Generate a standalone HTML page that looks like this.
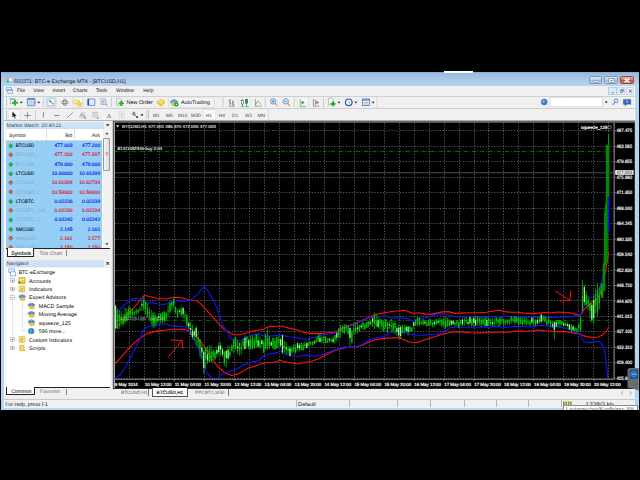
<!DOCTYPE html>
<html><head><meta charset="utf-8"><title>603371: BTC-e Exchange MT4 - [BTCUSD,H1]</title>
<style>
html,body{margin:0;padding:0;background:#000;}
body{width:640px;height:480px;overflow:hidden;position:relative;font-family:"Liberation Sans",sans-serif;font-size:5.1px;color:#000;line-height:1;text-rendering:geometricPrecision;}
div,span{position:absolute;white-space:nowrap;}
#win{left:1.4px;top:71.8px;width:637.2px;height:338px;background:linear-gradient(#7e98b8 0,#97badf 0.8px,#a3c3e4 5px,#b0cdea 10px,#b7d4ee 13.8px,#b2d5f3 20px,#b2d5f3 100%);}
#client{left:3.5px;top:85.8px;width:631.5px;height:322.4px;background:#f0f0f0;border-left:0.5px solid #fff;border-right:0.6px solid #fff;box-sizing:border-box}
.t{color:#1a1a1a;}
#title{left:14px;top:78.1px;font-size:5.35px;color:#000;letter-spacing:-0.05px;}
.menu{top:88.2px;font-size:5.1px;}
.sep{width:0.5px;background:#a8a8a8;}
.tbline{left:4.4px;width:630.2px;height:0.5px;background:#d0d0d0;}
.mwr{left:5.8px;width:96.2px;height:9.27px;background:#9fd2fa;border-top:0.5px solid #b8dffc;box-sizing:border-box;}
.mwr .ar{position:absolute;left:2.4px;top:2.2px;width:4.6px;height:4.6px;}
.mwr span{top:2.3px;font-size:5.1px;}
.mwr .sym{left:9.8px;}
.mwr .bid{right:29.6px;}
.mwr .ask{right:2px;}
.ptitle{left:5.6px;width:98.4px;height:7px;background:linear-gradient(#d6e5f7,#c9def4);font-size:5.3px;color:#3a4a60;}
.ptitle span{left:1px;top:1.1px;}
.tree{font-size:5.1px;color:#000;}
.ic{width:6.4px;height:6px;}
.per{top:112.6px;font-size:4.6px;color:#333;}
</style></head><body>
<div id="win"></div>
<div id="client"></div>
<!-- title -->
<div style="left:444px;top:70.9px;width:28.6px;height:1.8px;background:#fff;border-radius:0 0 1px 1px"></div>
<svg style="position:absolute;left:5.6px;top:77.4px" width="6.4" height="6" viewBox="0 0 6.4 6"><rect x="2.6" y="0.9" width="3.4" height="3.6" fill="#dcecfb" stroke="#8ab4e6" stroke-width="0.45"/><rect x="3.3" y="1.9" width="1.9" height="1.6" fill="#fff"/><circle cx="1.7" cy="2.1" r="1.15" fill="#f0923a"/><path d="M0.3 5.6q0-2.4 1.5-2.4t1.5 2.4z" fill="#4cb84c"/></svg>
<!-- window buttons -->
<div style="left:588.7px;top:76.4px;width:13.8px;height:7.6px;border-radius:1.6px;background:linear-gradient(#dbe7f5,#b4cbe6 50%,#9dbbdd 51%,#bdd3ec);border:0.5px solid #7b97ba;box-sizing:border-box"></div>
<div style="left:604.3px;top:76.4px;width:13.8px;height:7.6px;border-radius:1.6px;background:linear-gradient(#dbe7f5,#b4cbe6 50%,#9dbbdd 51%,#bdd3ec);border:0.5px solid #7b97ba;box-sizing:border-box"></div>
<div style="left:619.8px;top:76.4px;width:14.2px;height:7.6px;border-radius:1.6px;background:linear-gradient(#e6b0a2,#d67a66 50%,#c8452e 51%,#d8755c);border:0.5px solid #8a4a3c;box-sizing:border-box"></div>
<svg style="position:absolute;left:588px;top:76px" width="48" height="9" viewBox="0 0 48 9"><rect x="5.2" y="4.6" width="5" height="1.7" rx="0.5" fill="#fff" stroke="#445" stroke-width="0.4"/><rect x="20.8" y="2.6" width="5.2" height="3.8" fill="#fff" stroke="#445" stroke-width="0.4"/><rect x="22.4" y="3.9" width="2" height="1.3" fill="#5a78a0"/><path d="M36.7 2.6l4.6 3.8M41.3 2.6l-4.6 3.8" stroke="#fff" stroke-width="1.5"/></svg>
<!-- menu bar -->
<svg style="position:absolute;left:6.2px;top:87.1px" width="7" height="7" viewBox="0 0 14 14"><rect x="0.8" y="0.8" width="9.6" height="6.6" fill="#e6f0fc" stroke="#6a9ce0" stroke-width="1.2"/><rect x="3.6" y="4.6" width="9.6" height="8.4" fill="#f4f9ff" stroke="#5a90d8" stroke-width="1.2"/><path d="M3.6 6.6h9.6" stroke="#5a90d8" stroke-width="1.6"/><path d="M5.4 9.6h6" stroke="#a8c6ee" stroke-width="1"/></svg>
<!-- mdi buttons -->
<div style="left:608.4px;top:87px;width:8.4px;height:7.6px;background:#dcebfb;border:0.4px solid #b8cde6;box-sizing:border-box"></div>
<div style="left:617.4px;top:87px;width:8px;height:7.6px;background:#e9f1fb;border:0.4px solid #c8d8ec;box-sizing:border-box"></div>
<div style="left:626px;top:87px;width:8.2px;height:7.6px;background:#e9f1fb;border:0.4px solid #c8d8ec;box-sizing:border-box"></div>
<svg style="position:absolute;left:608px;top:87px" width="27" height="8" viewBox="0 0 27 8"><path d="M3.6 5.8h2.2" stroke="#556" stroke-width="0.7"/><rect x="12.2" y="3.2" width="2.4" height="2.2" fill="none" stroke="#556" stroke-width="0.6"/><path d="M13.2 3.2V2.2h2.4v2.2h-1" fill="none" stroke="#556" stroke-width="0.6"/><path d="M21.2 2.6l2.4 3M23.6 2.6l-2.4 3" stroke="#445" stroke-width="0.8"/></svg>
<div class="tbline" style="top:95.8px"></div>
<div class="tbline" style="top:108.4px"></div>
<div class="tbline" style="top:120.4px;background:#b8b8b8"></div>
<svg style="position:absolute;left:0;top:0" width="640" height="122" viewBox="0 0 640 122">
<path d="M6.5 97.4v9.2" stroke="#c2c2c2" stroke-width="0.9"/>
<path d="M6.5 110.2v9.2" stroke="#c2c2c2" stroke-width="0.9"/>
<path d="M148.6 110.2v9.2" stroke="#c2c2c2" stroke-width="0.9"/>
<path d="M43.60 97.6v9.4" stroke="#b0b0b0" stroke-width="0.6"/>
<path d="M111.40 97.6v9.4" stroke="#b0b0b0" stroke-width="0.6"/>
<path d="M223.00 97.6v9.4" stroke="#b0b0b0" stroke-width="0.6"/>
<path d="M265.30 97.6v9.4" stroke="#b0b0b0" stroke-width="0.6"/>
<path d="M294.40 97.6v9.4" stroke="#b0b0b0" stroke-width="0.6"/>
<path d="M323.60 97.6v9.4" stroke="#b0b0b0" stroke-width="0.6"/>
<path d="M35.50 110.2v9" stroke="#b0b0b0" stroke-width="0.6"/>
<path d="M146.80 110.2v9" stroke="#b0b0b0" stroke-width="0.6"/>
<path d="M377 96.6v11.4M268.4 109v11" stroke="#c8c8c8" stroke-width="0.6"/>
<rect x="46.2" y="97.2" width="10" height="10" rx="0.8" fill="#d6e8fa" stroke="#a8c8ea" stroke-width="0.5"/>
<rect x="72.4" y="97.2" width="10.6" height="10" rx="0.8" fill="#f8f8f8" stroke="#cfcfcf" stroke-width="0.5"/>
<rect x="239" y="97.2" width="11.2" height="10" rx="0.8" fill="#f4f7fb" stroke="#cdd6e0" stroke-width="0.5"/>
<rect x="297.6" y="97.2" width="10.4" height="10" rx="0.8" fill="#f8f8f8" stroke="#cfcfcf" stroke-width="0.5"/>
<rect x="8.2" y="109.6" width="11.6" height="10.2" rx="0.8" fill="#f9f9f9" stroke="#d0d0d0" stroke-width="0.5"/>
<rect x="203.2" y="109.6" width="12.6" height="10.2" rx="0.8" fill="#f9f9f9" stroke="#d0d0d0" stroke-width="0.5"/>
<rect x="168.6" y="97.2" width="45.6" height="10" rx="0.8" fill="#f5f5f5" stroke="#cdcdcd" stroke-width="0.5"/>
<rect x="10.2" y="98.8" width="4.8" height="4.6" fill="#f2f6fc" stroke="#7a9cd0" stroke-width="0.6"/><path d="M10.2 99.2h4.8" stroke="#5a86c8" stroke-width="0.8"/><path d="M12.2 102.7h5.6M15 99.9v5.6" stroke="#1cb81c" stroke-width="1.9"/>
<path d="M19.80 101.7h3l-1.5 1.9z" fill="#222"/>
<path d="M37.30 101.7h3l-1.5 1.9z" fill="#222"/>
<path d="M337.40 101.7h3l-1.5 1.9z" fill="#222"/>
<path d="M354.40 101.7h3l-1.5 1.9z" fill="#222"/>
<path d="M371.60 101.7h3l-1.5 1.9z" fill="#222"/>
<rect x="27.4" y="98.4" width="7.6" height="7.4" rx="0.5" fill="#dce8f8" stroke="#4a7ac8" stroke-width="0.8"/><path d="M27.4 99.2h7.6" stroke="#3a68b8" stroke-width="1"/><path d="M29 101.4h4.4v3h-4.4zM31.2 101.4v3M29 102.9h4.4" stroke="#6a90cc" stroke-width="0.4" fill="#fff"/><path d="M34.6 101.6l1 .8-1 .8z" fill="#2a58a8"/>
<rect x="47.9" y="98.8" width="6.8" height="6.8" rx="0.6" fill="#fbfdff" stroke="#8ab4e4" stroke-width="0.6"/><path d="M49.2 100.2l2 2" stroke="#18a818" stroke-width="1.3"/><path d="M51.4 102.4l2 2" stroke="#f06020" stroke-width="1.3"/>
<path d="M64.8 98.8l1.5 1.7h-.9v1.3h1.3v-.9l1.7 1.5-1.7 1.5v-.9h-1.3v1.3h.9l-1.5 1.7-1.5-1.7h.9v-1.3h-1.3v.9l-1.7-1.5 1.7-1.5v.9h1.3v-1.3h-.9z" fill="#f4f4f4" stroke="#444" stroke-width="0.55"/>
<path d="M73.6 99.4h2.6l.7.9h2.6v3.6h-5.9z" fill="#ffe98a" stroke="#d8b448" stroke-width="0.4"/><path d="M79.6 101.2l.95 1.75 1.95.3-1.4 1.4.3 1.95-1.8-.9-1.8.9.3-1.95-1.4-1.4 1.95-.3z" fill="#ffd83a" stroke="#c89a18" stroke-width="0.35"/><path d="M75.2 104v1.8" stroke="#999" stroke-width="0.4"/>
<rect x="87.4" y="99" width="7.4" height="6.4" rx="0.5" fill="#f4f8ff" stroke="#2a66cc" stroke-width="0.7"/><path d="M88.5 99.3v5.8" stroke="#1a4aa8" stroke-width="1.2"/><path d="M88 99.5h1.4" stroke="#d03020" stroke-width="0.7"/><path d="M90 100.8h3.8M90 102.2h3.8M90 103.6h3.8" stroke="#b8cdee" stroke-width="0.4"/>
<rect x="100.6" y="98.4" width="5" height="6" fill="#eee" stroke="#a0a0a0" stroke-width="0.4"/><circle cx="104" cy="102.2" r="2.3" fill="#d4e8fa" stroke="#5a90c8" stroke-width="0.6"/><path d="M103.4 101v1.4h1" stroke="#5a80b0" stroke-width="0.4" fill="none"/><path d="M105.7 104l2 2.2" stroke="#c8982a" stroke-width="1"/>
<path d="M116.6 98.2h3.4l1.6 1.6v5.4h-5z" fill="#f6f6f6" stroke="#909090" stroke-width="0.5"/><path d="M117.6 100.4h2M117.6 101.8h3" stroke="#bbb" stroke-width="0.4"/><path d="M118.6 103.4h5.4M121.3 100.7v5.4" stroke="#1cb81c" stroke-width="1.9"/>
<path d="M157 102l4-2.9 3.9 2.6-3.9 3.9z" fill="#ffd84a" stroke="#c89818" stroke-width="0.4"/><path d="M157 102l4 3.6 3.9-3.9v1l-3.9 3.9-4-3.6z" fill="#e0a820"/><path d="M159 101.6l2-1.4 1.9 1.2" stroke="#fff4b0" stroke-width="0.5" fill="none"/>
<path d="M170.4 101.8q3.6-4.6 7.2 0z" fill="#5a9ce0" stroke="#2a68b8" stroke-width="0.4"/><ellipse cx="174" cy="101.9" rx="3.9" ry="1.1" fill="#7ab8f0" stroke="#2a68b8" stroke-width="0.35"/><path d="M171 102.8h6q.4 2.6-3 3.2-3.4-.6-3-3.2z" fill="#f4d048" stroke="#b08c18" stroke-width="0.4"/><circle cx="176.4" cy="104.4" r="1.9" fill="#20b820" stroke="#0a780a" stroke-width="0.4"/><path d="M175.9 103.5l1.4.9-1.4.9z" fill="#fff"/>
<path d="M230 99v6.6M229 101.2h1M230 103.4h1M233 100.2v6M232 102.6h1M233 104.6h1" stroke="#333" stroke-width="0.6"/><path d="M228.6 106.4h6.6" stroke="#10a010" stroke-width="0.5"/>
<path d="M242.4 98.6v7.8M246.6 98.6v7.8" stroke="#222" stroke-width="0.5"/><rect x="241.5" y="100.4" width="1.8" height="3.6" fill="#fff" stroke="#222" stroke-width="0.45"/><rect x="245.5" y="99.4" width="2.2" height="3.8" fill="#18a818" stroke="#0a600a" stroke-width="0.45"/><path d="M240.6 106.4h8.4" stroke="#10a010" stroke-width="0.5"/>
<path d="M255.4 99.2v7h6" stroke="#555" stroke-width="0.5" fill="none"/><path d="M255.8 104.6q1.6-4.6 3-2.6t2.4 2.6" stroke="#18a018" stroke-width="0.6" fill="none"/>
<circle cx="273.2" cy="101.4" r="2.7" fill="#d6ebfb" stroke="#3a78c8" stroke-width="0.7"/>
<path d="M275.1 103.4l2.4 2.6" stroke="#c8962a" stroke-width="1.1"/>
<path d="M271.8 101.4h2.8" stroke="#2a5aa8" stroke-width="0.6"/>
<path d="M273.2 100v2.8" stroke="#2a5aa8" stroke-width="0.6"/>
<circle cx="285.8" cy="101.4" r="2.7" fill="#d6ebfb" stroke="#3a78c8" stroke-width="0.7"/>
<path d="M287.7 103.4l2.4 2.6" stroke="#c8962a" stroke-width="1.1"/>
<path d="M284.4 101.4h2.8" stroke="#2a5aa8" stroke-width="0.6"/>
<path d="M300.2 99v7.2h5.6" stroke="#444" stroke-width="0.5" fill="none"/><path d="M301.6 100.6l3 1.9-3 1.9z" fill="#18a818"/>
<path d="M313.4 99v7.2h6" stroke="#444" stroke-width="0.5" fill="none"/><path d="M315.4 99.6v5.4" stroke="#2a62c8" stroke-width="0.6"/><path d="M316.4 100.8l2.6 1.7-2.6 1.7z" fill="#e04818"/>
<path d="M328.4 98.2h3.6l1.4 1.4v5.2h-5z" fill="#f4f4f4" stroke="#8a8a8a" stroke-width="0.5"/><path d="M330.6 103.8h5M333.1 101.3v5" stroke="#18b018" stroke-width="1.8"/>
<circle cx="348.8" cy="102.3" r="3.3" fill="#fff" stroke="#1a58b8" stroke-width="1.2"/><path d="M348.8 100.6v1.8l1.2.8" stroke="#333" stroke-width="0.5" fill="none"/>
<rect x="362.4" y="99" width="7.2" height="6.4" fill="#f4f8ff" stroke="#2a62c8" stroke-width="0.7"/><path d="M362.4 100h7.2" stroke="#2a62c8" stroke-width="1"/><path d="M363.6 102.4h4.8" stroke="#d04010" stroke-width="0.5" fill="none"/><path d="M363.6 104h4.8" stroke="#20a020" stroke-width="0.5"/>
<circle cx="544.2" cy="102" r="3" fill="#3a78d8" stroke="#2a58a8" stroke-width="0.4"/><circle cx="543.6" cy="101.2" r="1.2" fill="#8ab8f0"/>
<rect x="550" y="97.2" width="52.6" height="9.6" fill="#fff" stroke="#b8c4d0" stroke-width="0.5"/>
<path d="M604.7 101.4h3l-1.5 1.8z" fill="#222"/>
<circle cx="616.2" cy="100.8" r="1.9" fill="#e8f2ff" stroke="#2a68d0" stroke-width="0.8"/><path d="M614.8 102.4l-2.2 2.6" stroke="#2a68d0" stroke-width="1"/>
<path d="M623.4 99.4h7.4v4.8h-4.2l-1.6 1.8v-1.8h-1.6z" fill="#3a68b8" stroke="#2a4a88" stroke-width="0.4"/><path d="M627.1 100.4v2.6" stroke="#e8f0ff" stroke-width="0.8"/>
<path d="M12.4 111.6v6l1.5-1.3 1 2.2.9-.4-1-2.2h1.9z" fill="#222"/>
<path d="M27.5 111.8v6.8M24 115.5h7" stroke="#555" stroke-width="0.55"/>
<path d="M43.4 112.2v5.4" stroke="#444" stroke-width="0.6"/><path d="M54 115.5h5.4" stroke="#444" stroke-width="0.6"/><path d="M67.2 117.9l5.6-5.6" stroke="#444" stroke-width="0.55"/>
<path d="M79.6 118l5.6-5.6M80.6 114.6l4.8 2M79.4 116.4l3.4-4.6M82 118.2l3.6-3" stroke="#555" stroke-width="0.45"/><text x="84.2" y="119.2" font-size="2.6" font-family="Liberation Sans, sans-serif" fill="#222">E</text>
<path d="M92 112.4h6.4M92 114h6.4M92 115.6h6.4M92 117.2h6.4" stroke="#888" stroke-width="0.4"/><text x="97" y="119.4" font-size="2.6" font-family="Liberation Sans, sans-serif" fill="#222">F</text>
<text x="106.8" y="117.6" font-size="6" font-family="Liberation Serif, serif" fill="#555">A</text>
<rect x="119.4" y="111.8" width="5" height="6.2" fill="#f6f6f6" stroke="#999" stroke-width="0.4" stroke-dasharray="0.6 0.4"/><text x="120.3" y="117" font-size="5" font-family="Liberation Serif, serif" fill="#777">T</text>
<path d="M132.4 113.2l1.4-1.4 1.4 1.4M133.8 112v4M131.8 114h4" stroke="#333" stroke-width="0.55" fill="none"/><path d="M134.4 114.6l3 2.4" stroke="#333" stroke-width="0.6"/><path d="M135.8 117.8l2.4.2-.6-2.2z" fill="#333"/>
<path d="M140.5 114.3h3l-1.5 1.9z" fill="#222"/>
</svg>
<!-- market watch -->
<div style="left:5.2px;top:121.2px;width:105.2px;height:137px;background:#f0f0f0"></div>
<div class="ptitle" style="top:121.6px"></div>
<svg style="position:absolute;left:106.3px;top:123.6px" width="3.4" height="2.9" viewBox="0 0 6 6" preserveAspectRatio="none"><path d="M0.8 0.8l4.4 4.4M5.2 0.8l-4.4 4.4" stroke="#111" stroke-width="1.9"/></svg>
<div style="left:5.8px;top:129.1px;width:104.4px;height:119.2px;background:#fff"></div>
<div style="left:5.8px;top:140.2px;width:96.2px;height:0.5px;background:#d8d8d8"></div>
<svg style="position:absolute;left:5.8px;top:140.6px" width="96.2" height="107.5" viewBox="5.8 140.6 96.2 107.5" font-family="Liberation Sans, sans-serif" font-size="5" text-rendering="geometricPrecision">
<rect x="5.8" y="140.6" width="96.2" height="108" fill="#92cff9"/>
<path d="M5.8 140.60H102" stroke="#b2c6d6" stroke-width="0.45"/>
<path d="M10.60 143.30l2.1 2.2h-1.1v1.7h-2v-1.7h-1.1z" fill="#34c834" stroke="#0b5c0b" stroke-width="0.45"/>
<text x="15.6" y="147" fill="#000" stroke="#000" stroke-width="0.07" textLength="18.3" lengthAdjust="spacingAndGlyphs">BTCUSD</text>
<text x="72.4" y="147" fill="#1414f4" stroke="#1414f4" stroke-width="0.14" text-anchor="end">477.003</text>
<text x="100" y="147" fill="#1414f4" stroke="#1414f4" stroke-width="0.14" text-anchor="end">477.200</text>
<path d="M5.8 149.87H102" stroke="#b2c6d6" stroke-width="0.45"/>
<path d="M10.60 156.57l2.1 -2.2h-1.1v-1.7h-2v1.7h-1.1z" fill="#ff6a28" stroke="#8a2400" stroke-width="0.45"/>
<text x="15.6" y="156" fill="#8fa6ba" textLength="26.0" lengthAdjust="spacingAndGlyphs">BTCUSD_...</text>
<text x="72.4" y="156" fill="#e01030" stroke="#e01030" stroke-width="0.14" text-anchor="end">477.200</text>
<text x="100" y="156" fill="#e01030" stroke="#e01030" stroke-width="0.14" text-anchor="end">477.397</text>
<path d="M5.8 159.14H102" stroke="#b2c6d6" stroke-width="0.45"/>
<path d="M10.60 161.84l2.1 2.2h-1.1v1.7h-2v-1.7h-1.1z" fill="#34c834" stroke="#0b5c0b" stroke-width="0.45"/>
<text x="15.6" y="166" fill="#8fa6ba" textLength="24.4" lengthAdjust="spacingAndGlyphs">BTCUSD_L</text>
<text x="72.4" y="166" fill="#1414f4" stroke="#1414f4" stroke-width="0.14" text-anchor="end">478.000</text>
<text x="100" y="166" fill="#1414f4" stroke="#1414f4" stroke-width="0.14" text-anchor="end">478.000</text>
<path d="M5.8 168.41H102" stroke="#b2c6d6" stroke-width="0.45"/>
<path d="M10.60 171.11l2.1 2.2h-1.1v1.7h-2v-1.7h-1.1z" fill="#34c834" stroke="#0b5c0b" stroke-width="0.45"/>
<text x="15.6" y="175" fill="#000" stroke="#000" stroke-width="0.07" textLength="18.3" lengthAdjust="spacingAndGlyphs">LTCUSD</text>
<text x="72.4" y="175" fill="#1414f4" stroke="#1414f4" stroke-width="0.14" text-anchor="end">10.60000</text>
<text x="100" y="175" fill="#1414f4" stroke="#1414f4" stroke-width="0.14" text-anchor="end">10.61399</text>
<path d="M5.8 177.68H102" stroke="#b2c6d6" stroke-width="0.45"/>
<path d="M10.60 184.38l2.1 -2.2h-1.1v-1.7h-2v1.7h-1.1z" fill="#ff6a28" stroke="#8a2400" stroke-width="0.45"/>
<text x="15.6" y="184" fill="#8fa6ba" textLength="26.0" lengthAdjust="spacingAndGlyphs">LTCUSD_...</text>
<text x="72.4" y="184" fill="#e01030" stroke="#e01030" stroke-width="0.14" text-anchor="end">10.61399</text>
<text x="100" y="184" fill="#e01030" stroke="#e01030" stroke-width="0.14" text-anchor="end">10.62798</text>
<path d="M5.8 186.95H102" stroke="#b2c6d6" stroke-width="0.45"/>
<path d="M10.60 193.65l2.1 -2.2h-1.1v-1.7h-2v1.7h-1.1z" fill="#ff6a28" stroke="#8a2400" stroke-width="0.45"/>
<text x="15.6" y="194" fill="#8fa6ba" textLength="24.4" lengthAdjust="spacingAndGlyphs">LTCUSD_L</text>
<text x="72.4" y="194" fill="#e01030" stroke="#e01030" stroke-width="0.14" text-anchor="end">10.59900</text>
<text x="100" y="194" fill="#e01030" stroke="#e01030" stroke-width="0.14" text-anchor="end">10.59900</text>
<path d="M5.8 196.22H102" stroke="#b2c6d6" stroke-width="0.45"/>
<path d="M10.60 198.92l2.1 2.2h-1.1v1.7h-2v-1.7h-1.1z" fill="#34c834" stroke="#0b5c0b" stroke-width="0.45"/>
<text x="15.6" y="203" fill="#000" stroke="#000" stroke-width="0.07" textLength="18.3" lengthAdjust="spacingAndGlyphs">LTCBTC</text>
<text x="72.4" y="203" fill="#1414f4" stroke="#1414f4" stroke-width="0.14" text-anchor="end">0.02226</text>
<text x="100" y="203" fill="#1414f4" stroke="#1414f4" stroke-width="0.14" text-anchor="end">0.02238</text>
<path d="M5.8 205.49H102" stroke="#b2c6d6" stroke-width="0.45"/>
<path d="M10.60 212.19l2.1 -2.2h-1.1v-1.7h-2v1.7h-1.1z" fill="#ff6a28" stroke="#8a2400" stroke-width="0.45"/>
<text x="15.6" y="212" fill="#8fa6ba" textLength="30.5" lengthAdjust="spacingAndGlyphs">LTCBTC_Ask</text>
<text x="72.4" y="212" fill="#e01030" stroke="#e01030" stroke-width="0.14" text-anchor="end">0.02230</text>
<text x="100" y="212" fill="#e01030" stroke="#e01030" stroke-width="0.14" text-anchor="end">0.02234</text>
<path d="M5.8 214.76H102" stroke="#b2c6d6" stroke-width="0.45"/>
<path d="M10.60 217.46l2.1 2.2h-1.1v1.7h-2v-1.7h-1.1z" fill="#34c834" stroke="#0b5c0b" stroke-width="0.45"/>
<text x="15.6" y="221" fill="#8fa6ba" textLength="24.4" lengthAdjust="spacingAndGlyphs">LTCBTC_L</text>
<text x="72.4" y="221" fill="#1414f4" stroke="#1414f4" stroke-width="0.14" text-anchor="end">0.02242</text>
<text x="100" y="221" fill="#1414f4" stroke="#1414f4" stroke-width="0.14" text-anchor="end">0.02242</text>
<path d="M5.8 224.03H102" stroke="#b2c6d6" stroke-width="0.45"/>
<path d="M10.60 226.73l2.1 2.2h-1.1v1.7h-2v-1.7h-1.1z" fill="#34c834" stroke="#0b5c0b" stroke-width="0.45"/>
<text x="15.6" y="231" fill="#000" stroke="#000" stroke-width="0.07" textLength="18.3" lengthAdjust="spacingAndGlyphs">NMCUSD</text>
<text x="72.4" y="231" fill="#1414f4" stroke="#1414f4" stroke-width="0.14" text-anchor="end">2.145</text>
<text x="100" y="231" fill="#1414f4" stroke="#1414f4" stroke-width="0.14" text-anchor="end">2.161</text>
<path d="M5.8 233.30H102" stroke="#b2c6d6" stroke-width="0.45"/>
<path d="M10.60 240.00l2.1 -2.2h-1.1v-1.7h-2v1.7h-1.1z" fill="#ff6a28" stroke="#8a2400" stroke-width="0.45"/>
<text x="15.6" y="240" fill="#8fa6ba" textLength="26.0" lengthAdjust="spacingAndGlyphs">NMCUSD ...</text>
<text x="72.4" y="240" fill="#e01030" stroke="#e01030" stroke-width="0.14" text-anchor="end">2.161</text>
<text x="100" y="240" fill="#e01030" stroke="#e01030" stroke-width="0.14" text-anchor="end">2.177</text>
<path d="M5.8 242.57H102" stroke="#b2c6d6" stroke-width="0.45"/>
<path d="M10.60 249.27l2.1 -2.2h-1.1v-1.7h-2v1.7h-1.1z" fill="#ff6a28" stroke="#8a2400" stroke-width="0.45"/>
<text x="15.6" y="249" fill="#8fa6ba" textLength="24.4" lengthAdjust="spacingAndGlyphs">NMCUSD_L</text>
<text x="72.4" y="249" fill="#e01030" stroke="#e01030" stroke-width="0.14" text-anchor="end">2.150</text>
<text x="100" y="249" fill="#e01030" stroke="#e01030" stroke-width="0.14" text-anchor="end">2.150</text>
<path d="M46.5 140.6V249M74.6 140.6V249" stroke="#b2c6d6" stroke-width="0.45"/>
</svg>
<div style="left:46.3px;top:129.4px;width:0.5px;height:11px;background:#e0e0e0"></div>
<div style="left:74.4px;top:129.4px;width:0.5px;height:11px;background:#e0e0e0"></div>
<!-- scrollbar -->
<div style="left:102.6px;top:129.1px;width:7.6px;height:119.2px;background:#f0f0f0"></div>
<div style="left:103.2px;top:137.6px;width:6.6px;height:33px;border-radius:1px;background:linear-gradient(90deg,#f4f4f4,#dcdcdc);border:0.5px solid #9a9a9a;box-sizing:border-box"></div>
<svg style="position:absolute;left:102.6px;top:129.1px" width="8" height="120" viewBox="0 0 8 120"><path d="M2.5 5.2l1.4-1.8L5.3 5.2z" fill="#111"/><path d="M2.5 114.2l1.4 1.8 1.4-1.8z" fill="#111"/><path d="M2.6 23.5h2.6M2.6 24.7h2.6M2.6 25.9h2.6" stroke="#777" stroke-width="0.5"/></svg>
<div style="left:5.6px;top:248.1px;width:104.8px;height:0.7px;background:#222"></div>
<!-- mw tabs -->
<div style="left:6.9px;top:248.4px;width:27.6px;height:8.4px;background:#fff;border:0.7px solid #222;border-top:none;box-sizing:border-box"></div>
<div class="sep" style="left:66.2px;top:250px;height:5.8px;background:#888"></div>
<!-- navigator -->
<div class="ptitle" style="top:260px;height:7.4px"></div>
<svg style="position:absolute;left:106.3px;top:262.1px" width="3.4" height="2.9" viewBox="0 0 6 6" preserveAspectRatio="none"><path d="M0.8 0.8l4.4 4.4M5.2 0.8l-4.4 4.4" stroke="#111" stroke-width="1.9"/></svg>
<div style="left:5.8px;top:267.8px;width:104.4px;height:119.2px;background:#fff"></div>
<svg style="position:absolute;left:0;top:260px" width="112" height="130" viewBox="0 260 112 130">
<path d="M12.5 276v72M12.5 280.7h5M12.5 289.1h5M12.5 297.5h5M12.5 339.6h5M12.5 348h5M22.4 301v30.1M22.4 305.9h4.4M22.4 314.3h4.4M22.4 322.7h4.4M22.4 331.1h4.4" stroke="#9a9a9a" stroke-width="0.45" stroke-dasharray="0.5 0.5" fill="none"/>
<rect x="8.8" y="268.9" width="5.4" height="3.6" fill="#eaf2fc" stroke="#4a88d8" stroke-width="0.6"/><rect x="10.4" y="271.9" width="5" height="4" fill="#fff" stroke="#4a88d8" stroke-width="0.6"/>
<rect x="10.7" y="278.8" width="3.7" height="3.7" fill="#fff" stroke="#8a8a8a" stroke-width="0.4"/>
<path d="M11.5 280.7h2.1" stroke="#2a3a8a" stroke-width="0.5"/>
<path d="M12.55 279.6v2.1" stroke="#2a3a8a" stroke-width="0.5"/>
<rect x="18.8" y="277.5" width="6.4" height="6.2" rx="0.8" fill="#e8c030" stroke="#a88410" stroke-width="0.4"/><circle cx="20.8" cy="279.7" r="1.1" fill="#fff2a0"/><circle cx="23.4" cy="279.7" r="1.1" fill="#fff2a0"/><circle cx="19.2" cy="282.7" r="1.1" fill="#18b018"/>
<rect x="10.7" y="287.2" width="3.7" height="3.7" fill="#fff" stroke="#8a8a8a" stroke-width="0.4"/>
<path d="M11.5 289.1h2.1" stroke="#2a3a8a" stroke-width="0.5"/>
<path d="M12.55 288.1v2.1" stroke="#2a3a8a" stroke-width="0.5"/>
<rect x="19.0" y="285.9" width="6" height="6.2" rx="0.8" fill="#f6de72" stroke="#b89820" stroke-width="0.4"/><text x="21.0" y="290.7" font-size="4.4" font-style="italic" font-family="Liberation Serif, serif" fill="#7a5a08">f</text>
<rect x="10.7" y="295.6" width="3.7" height="3.7" fill="#fff" stroke="#8a8a8a" stroke-width="0.4"/>
<path d="M11.5 297.5h2.1" stroke="#2a3a8a" stroke-width="0.5"/>
<ellipse cx="22.2" cy="296.5" rx="3.4" ry="1.5" fill="#5a9ae0" stroke="#2a62b0" stroke-width="0.35"/><path d="M20.2 295.7q2-2.6 4 0z" fill="#8ac0f0" stroke="#2a62b0" stroke-width="0.3"/><ellipse cx="22.6" cy="298.9" rx="2.7" ry="1.6" fill="#f0c838" stroke="#a88818" stroke-width="0.35"/>
<ellipse cx="31.4" cy="304.9" rx="3.4" ry="1.5" fill="#5a9ae0" stroke="#2a62b0" stroke-width="0.35"/><path d="M29.4 304.1q2-2.6 4 0z" fill="#8ac0f0" stroke="#2a62b0" stroke-width="0.3"/><ellipse cx="31.8" cy="307.3" rx="2.7" ry="1.6" fill="#f0c838" stroke="#a88818" stroke-width="0.35"/>
<ellipse cx="31.4" cy="313.3" rx="3.4" ry="1.5" fill="#5a9ae0" stroke="#2a62b0" stroke-width="0.35"/><path d="M29.4 312.5q2-2.6 4 0z" fill="#8ac0f0" stroke="#2a62b0" stroke-width="0.3"/><ellipse cx="31.8" cy="315.7" rx="2.7" ry="1.6" fill="#f0c838" stroke="#a88818" stroke-width="0.35"/>
<ellipse cx="31.4" cy="321.7" rx="3.4" ry="1.5" fill="#5a9ae0" stroke="#2a62b0" stroke-width="0.35"/><path d="M29.4 320.9q2-2.6 4 0z" fill="#8ac0f0" stroke="#2a62b0" stroke-width="0.3"/><ellipse cx="31.8" cy="324.1" rx="2.7" ry="1.6" fill="#f0c838" stroke="#a88818" stroke-width="0.35"/>
<circle cx="31.2" cy="331.1" r="2.9" fill="#3a8ae0" stroke="#1a58a8" stroke-width="0.4"/><path d="M30.4 328.9q1.4 1.2.4 2.6t.8 2" stroke="#7ad06a" stroke-width="1" fill="none"/>
<rect x="10.7" y="337.8" width="3.7" height="3.7" fill="#fff" stroke="#8a8a8a" stroke-width="0.4"/>
<path d="M11.5 339.6h2.1" stroke="#2a3a8a" stroke-width="0.5"/>
<path d="M12.55 338.6v2.1" stroke="#2a3a8a" stroke-width="0.5"/>
<rect x="19.0" y="336.4" width="6" height="6.2" rx="0.8" fill="#f6de72" stroke="#b89820" stroke-width="0.4"/><text x="21.0" y="341.2" font-size="4.4" font-style="italic" font-family="Liberation Serif, serif" fill="#7a5a08">f</text>
<rect x="10.7" y="346.1" width="3.7" height="3.7" fill="#fff" stroke="#8a8a8a" stroke-width="0.4"/>
<path d="M11.5 348.0h2.1" stroke="#2a3a8a" stroke-width="0.5"/>
<path d="M12.55 346.9v2.1" stroke="#2a3a8a" stroke-width="0.5"/>
<path d="M19.6 345.2h4.6v4.2q0 1.4 1.4 1.4h-5q-1 0-1-1.4z" fill="#f4d858" stroke="#b08a18" stroke-width="0.4"/>
</svg>
<div style="left:5.6px;top:387px;width:104.8px;height:0.7px;background:#222"></div>
<div style="left:6.3px;top:387.3px;width:28.8px;height:8px;background:#fff;border:0.7px solid #222;border-top:none;box-sizing:border-box"></div>
<div class="sep" style="left:66.2px;top:388.8px;height:5.8px;background:#888"></div>
<svg style="position:absolute;left:0;top:0" width="640" height="480" viewBox="0 0 640 480">
<rect x="112.8" y="120.9" width="521.9" height="267.1" fill="#3c3c3c"/>
<rect x="113.7" y="121.6" width="521" height="266.4" fill="#a8a8a8"/>
<rect x="115" y="122.5" width="519.7" height="265.5" fill="#000"/>
<path d="M129.5 122.5V379.4M144.5 122.5V379.4M159.5 122.5V379.4M174.5 122.5V379.4M189.5 122.5V379.4M204.5 122.5V379.4M219.5 122.5V379.4M234.5 122.5V379.4M249.5 122.5V379.4M264.5 122.5V379.4M279.5 122.5V379.4M294.5 122.5V379.4M309.5 122.5V379.4M324.5 122.5V379.4M339.5 122.5V379.4M354.5 122.5V379.4M369.5 122.5V379.4M384.5 122.5V379.4M399.5 122.5V379.4M414.5 122.5V379.4M429.5 122.5V379.4M444.5 122.5V379.4M459.5 122.5V379.4M474.5 122.5V379.4M488.5 122.5V379.4M503.5 122.5V379.4M518.5 122.5V379.4M533.5 122.5V379.4M548.5 122.5V379.4M563.5 122.5V379.4M578.5 122.5V379.4M593.5 122.5V379.4M608.5 122.5V379.4M115 130.50H614.4M115 146.50H614.4M115 161.50H614.4M115 177.50H614.4M115 192.50H614.4M115 208.50H614.4M115 223.50H614.4M115 239.50H614.4M115 254.50H614.4M115 270.50H614.4M115 285.50H614.4M115 300.50H614.4M115 316.50H614.4M115 331.50H614.4M115 347.50H614.4M115 362.50H614.4M115 378.50H614.4" stroke="#87939f" stroke-width="0.62" stroke-dasharray="1.25 1.6" fill="none"/>
<path d="M115 172.8H614.4" stroke="#4c5964" stroke-width="0.9"/>
<path d="M115 151.4H614" stroke="#00a000" stroke-width="0.72" stroke-dasharray="4.2 1.6 0.9 1.6" fill="none"/>
<path d="M115 320.5H614" stroke="#008800" stroke-width="0.7" stroke-dasharray="4.2 1.6 0.9 1.6" fill="none"/>
<polyline points="114.7,329.5 119.4,324.0 125.6,316.2 133.4,308.4 141.2,299.0 144.4,295.2 150.6,296.7 156.9,298.3 166.2,299.0 172.5,297.5 178.8,297.2 185.0,298.8 191.2,300.3 196.2,300.6 200.9,303.8 205.6,309.2 211.9,316.2 218.1,323.3 224.4,329.5 230.6,333.4 235.3,335.0 241.6,334.2 247.8,332.7 252.5,331.1 258.8,330.0 263.4,329.5 266.6,327.2 271.2,326.4 277.5,326.3 282.5,326.2 288.8,328.1 296.6,329.7 304.4,332.5 312.2,333.6 320.0,333.6 327.8,332.8 335.6,332.0 340.3,328.9 348.1,325.8 354.4,323.4 360.6,321.0 366.9,318.5 368.8,317.0 375.0,314.7 381.2,313.4 387.5,312.3 393.8,311.2 400.0,310.8 404.7,310.3 409.4,311.9 414.0,313.4 418.8,312.8 425.0,313.9 431.2,314.4 436.2,313.1 442.5,311.9 448.8,311.6 455.0,313.4 461.2,313.1 467.5,312.8 473.8,312.8 480.0,312.8 486.2,312.3 492.5,311.2 498.8,310.3 505.0,311.6 511.2,312.3 517.5,312.3 523.8,313.1 532.5,313.6 538.8,313.1 545.0,312.5 551.2,312.8 557.5,312.0 563.8,312.5 570.0,312.8 576.2,314.4 580.2,315.2 581.7,313.6 584.0,309.7 588.8,305.0 593.4,301.1 597.5,298.0 600.0,293.3 602.5,286.7 604.2,278.3 605.8,270.0 607.5,260.0 608.7,252.5" fill="none" stroke="#ff1010" stroke-width="1.1" stroke-linejoin="round"/>
<polyline points="114.7,364.0 119.4,359.2 125.6,352.2 133.4,343.6 141.2,337.3 147.5,333.4 156.9,331.1 166.2,330.0 175.6,329.2 185.0,329.4 188.1,330.5 192.5,334.0 198.8,338.8 203.4,345.0 208.1,353.0 212.8,360.3 219.0,367.7 225.3,373.1 231.6,375.5 237.8,373.9 242.5,371.6 248.8,367.7 255.0,366.1 261.2,363.8 267.5,362.5 273.8,362.2 276.2,361.7 280.2,360.2 284.0,361.7 290.3,362.5 298.1,364.0 304.4,362.5 312.2,361.0 318.4,359.0 323.1,356.2 329.4,353.1 335.6,350.3 341.9,348.4 348.1,347.2 356.2,346.7 362.5,345.2 368.8,342.0 375.0,339.7 381.2,338.9 387.5,338.1 393.8,337.8 400.0,338.1 404.7,340.0 409.4,342.0 415.6,342.8 420.3,341.6 425.0,339.7 431.2,337.8 436.2,336.2 442.5,334.2 448.8,332.7 455.0,331.6 461.2,331.9 470.6,332.7 480.0,333.1 489.4,332.2 498.8,332.2 508.1,332.2 514.4,331.1 520.0,330.8 526.2,331.2 532.5,330.8 538.8,330.0 545.0,330.8 551.2,331.2 557.5,331.6 563.8,331.6 570.0,332.3 574.7,333.4 580.2,333.9 582.5,335.5 587.2,336.6 593.4,337.5 598.1,337.0 602.8,334.7 606.7,330.8 608.8,326.9" fill="none" stroke="#ff1010" stroke-width="1.1" stroke-linejoin="round"/>
<polyline points="114.7,313.9 119.4,310.0 125.6,303.8 131.9,299.0 136.6,298.3 141.2,299.0 143.6,301.4 146.0,303.8 150.6,302.5 156.9,303.8 163.1,304.5 167.8,303.8 170.2,300.6 175.6,300.6 181.9,301.4 188.1,300.6 192.8,298.3 197.5,294.4 201.5,289.0 204.2,286.2 207.2,289.7 211.9,297.5 216.6,306.9 219.7,316.2 222.8,325.6 225.9,330.3 229.0,335.0 232.2,339.4 235.3,340.5 241.6,340.5 246.2,337.3 252.5,335.0 258.8,333.6 261.9,335.6 268.1,336.1 274.4,335.7 280.6,335.2 288.8,336.7 296.6,337.5 304.4,339.4 310.6,338.3 316.9,336.7 323.1,334.4 329.4,334.0 335.6,333.1 340.3,330.5 346.6,327.3 350.0,326.0 356.2,323.3 362.5,321.0 368.8,318.1 373.4,317.0 379.7,316.2 386.0,316.0 390.6,317.8 396.9,318.1 403.1,317.8 407.8,318.6 412.5,321.2 417.2,319.7 423.4,318.1 429.7,317.0 434.7,314.5 439.4,313.6 444.0,314.0 448.8,315.5 453.4,316.2 461.2,317.0 470.6,317.0 480.0,317.0 489.4,317.0 498.8,316.7 508.1,316.2 517.5,316.5 523.8,317.4 532.5,317.5 538.8,317.2 545.0,317.2 551.2,317.5 557.5,317.2 563.8,317.2 570.0,316.7 576.2,315.6 580.2,316.0 581.7,311.2 584.0,306.6 587.2,301.1 590.3,297.8 593.4,297.8 596.6,294.5 598.9,290.0 601.2,283.0 602.8,276.0 604.2,266.7 605.8,253.3 607.0,236.7 608.0,220.0 608.8,195.0" fill="none" stroke="#1414ff" stroke-width="1.1" stroke-linejoin="round"/>
<polyline points="114.7,379.0 120.0,375.0 125.0,368.0 130.3,358.4 135.0,349.0 139.7,339.7 142.8,331.9 145.2,328.0 150.6,325.9 155.3,325.3 160.0,324.0 166.2,324.0 172.5,326.4 178.8,326.4 185.0,326.8 188.1,329.0 190.9,334.0 194.4,340.0 197.5,346.0 200.0,352.5 202.5,360.0 205.0,370.0 209.7,376.2 213.6,379.0 217.5,378.6 222.2,373.9 226.9,372.3 233.1,370.0 239.4,367.7 242.5,365.3 248.8,363.0 255.0,361.4 259.7,359.8 263.4,356.0 268.1,354.3 274.4,353.0 276.2,353.1 281.0,350.8 284.0,353.9 290.3,355.5 298.1,356.2 306.0,355.0 313.8,356.0 320.0,355.5 326.2,353.1 332.5,350.8 338.8,348.8 345.0,346.9 350.0,347.3 356.2,346.5 362.5,344.2 368.8,340.5 375.0,338.1 381.2,337.3 386.0,335.8 390.6,332.7 395.3,331.6 400.0,331.1 404.7,332.7 409.4,334.2 415.6,335.0 421.9,335.3 428.1,334.8 436.2,334.7 442.5,332.7 447.2,329.5 450.3,327.5 456.6,327.2 464.4,327.2 473.8,327.2 483.1,326.9 489.4,327.2 495.6,326.4 501.9,327.2 508.1,327.2 514.4,326.4 520.6,326.2 526.2,326.6 532.5,326.9 538.8,325.6 545.0,325.6 551.2,326.6 557.5,326.9 563.8,327.7 570.0,329.2 574.7,332.3 580.2,333.9 581.7,337.8 584.0,341.7 588.8,342.5 593.4,341.7 598.1,341.2 601.2,342.5 603.6,347.2 605.2,355.0 606.5,365.0 607.8,379.0" fill="none" stroke="#1414ff" stroke-width="1.1" stroke-linejoin="round"/>
<path d="M115.60 304.5V329.5M117.47 308.5V329.1M119.35 310.6V328.8M121.22 310.9V325.6M123.10 313.9V325.7M124.97 307.7V323.5M126.85 308.2V321.5M128.72 305.9V318.4M130.60 307.4V318.6M132.47 308.6V316.6M134.35 310.5V316.0M136.22 308.3V315.0M138.10 308.8V313.7M139.97 306.5V311.4M141.85 300.7V310.4M143.72 296.7V311.0M145.60 301.1V314.9M147.47 303.6V317.1M149.35 307.5V317.9M151.22 309.8V324.6M153.10 311.8V328.4M154.97 312.3V327.4M156.85 316.1V324.2M158.72 312.8V321.9M160.60 313.2V323.3M162.47 311.8V323.2M164.35 310.8V322.8M166.22 312.4V320.6M168.10 305.7V317.6M169.97 302.3V313.7M171.85 301.4V310.3M173.72 296.7V308.0M175.60 306.3V313.8M177.47 308.9V318.0M179.35 308.2V314.4M181.22 306.8V316.6M183.10 306.6V318.4M184.97 310.9V319.4M186.85 314.0V326.7M188.72 321.3V329.0M190.60 322.1V335.0M192.47 324.4V339.4M194.35 328.8V340.7M196.22 326.3V345.1M198.10 331.9V347.4M199.97 339.1V357.7M201.85 344.1V359.0M203.72 350.0V374.0M205.60 347.0V368.8M207.47 346.2V364.3M209.35 345.2V361.9M211.22 345.5V362.5M213.10 349.2V360.0M214.97 349.6V360.1M216.85 347.1V357.5M218.72 342.9V355.4M220.60 342.2V356.0M222.47 348.0V357.0M224.35 350.8V366.1M226.22 349.0V367.7M228.10 345.0V359.4M229.97 347.0V357.6M231.85 344.7V351.9M233.72 338.5V352.9M235.60 337.2V350.5M237.47 340.2V353.6M239.35 342.3V355.6M241.22 341.4V354.8M243.10 338.3V349.8M244.97 335.1V349.5M246.85 336.3V347.7M248.72 338.3V349.5M250.60 335.6V350.0M252.47 335.6V349.6M254.35 337.4V348.7M256.23 334.5V348.2M258.10 334.2V347.2M259.98 336.3V348.9M261.85 339.0V347.5M263.73 340.1V353.0M265.60 333.5V349.9M267.48 328.6V350.0M269.35 335.9V349.2M271.23 340.7V346.2M273.10 337.7V349.5M274.98 338.1V349.5M276.85 336.6V348.5M278.73 336.3V347.2M280.60 337.7V347.0M282.48 334.4V354.0M284.35 341.0V352.4M286.23 342.0V354.4M288.10 346.1V353.8M289.98 346.3V356.5M291.85 346.2V354.4M293.73 344.1V352.6M295.60 344.4V353.7M297.48 342.4V351.1M299.35 342.7V351.7M301.23 342.9V350.2M303.10 343.1V350.5M304.98 341.6V348.8M306.85 341.5V348.4M308.73 340.4V345.7M310.60 341.1V344.7M312.48 340.9V345.5M314.35 339.6V344.6M316.23 337.2V343.5M318.10 334.4V342.1M319.98 334.2V342.2M321.85 336.3V343.0M323.73 335.3V343.3M325.60 336.2V343.1M327.48 338.1V343.1M329.35 337.9V342.9M331.23 337.6V342.4M333.10 336.3V343.5M334.98 334.9V343.5M336.85 331.4V341.4M338.73 327.8V338.3M340.60 325.0V337.9M342.48 324.6V333.1M344.35 324.1V333.7M346.23 323.7V330.9M348.10 325.4V335.3M349.98 327.0V346.0M351.85 330.2V343.6M353.73 324.4V334.9M355.60 322.8V334.3M357.48 322.7V333.4M359.35 325.1V331.7M361.23 323.3V329.0M363.10 322.1V330.4M364.98 323.5V329.8M366.85 321.6V328.0M368.73 320.8V327.3M370.60 319.7V325.5M372.48 317.2V327.0M374.35 312.3V329.0M376.23 314.2V327.2M378.10 316.3V328.1M379.98 318.5V328.9M381.85 319.3V331.1M383.73 320.8V331.6M385.60 318.8V328.7M387.48 321.6V332.7M389.35 321.3V329.0M391.23 318.8V331.9M393.10 321.2V332.3M394.98 320.7V334.4M396.85 326.1V336.2M398.73 324.2V338.2M400.60 325.0V339.2M402.48 325.0V333.1M404.35 325.1V333.4M406.23 324.7V332.0M408.10 326.5V335.5M409.98 326.3V332.4M411.85 326.9V331.5M413.73 321.7V328.5M415.60 319.7V326.0M417.48 316.0V326.4M419.35 317.5V326.4M421.23 320.4V324.4M423.10 318.7V325.8M424.98 319.8V325.6M426.85 320.2V326.9M428.73 319.4V326.0M430.60 318.9V325.8M432.48 321.5V327.6M434.35 320.3V326.7M436.23 318.8V325.0M438.10 318.8V323.8M439.98 317.7V326.1M441.85 318.8V326.7M443.73 317.7V328.2M445.60 317.2V328.5M447.48 317.4V326.6M449.35 318.6V326.5M451.23 320.1V325.5M453.10 319.8V325.0M454.98 322.0V326.7M456.85 320.0V326.4M458.73 321.4V327.5M460.60 319.6V325.1M462.48 318.4V326.3M464.35 317.3V325.7M466.23 317.0V323.9M468.10 319.1V326.2M469.98 316.3V324.8M471.85 318.4V326.7M473.73 316.7V326.8M475.60 316.2V325.8M477.48 316.2V325.7M479.35 316.8V325.7M481.23 316.8V326.7M483.10 318.0V324.7M484.98 316.2V326.5M486.85 317.0V326.5M488.73 318.1V325.6M490.60 319.0V326.3M492.48 318.3V326.3M494.35 318.9V326.3M496.23 316.9V324.7M498.10 318.6V326.3M499.98 316.9V325.7M501.85 316.9V323.9M503.73 318.7V326.4M505.60 319.1V325.4M507.48 319.4V324.9M509.35 319.2V324.8M511.23 316.3V323.9M513.10 317.1V322.5M514.98 315.9V325.0M516.85 316.9V323.0M518.73 316.6V325.2M520.60 317.0V324.4M522.48 317.8V325.3M524.35 317.5V324.5M526.23 317.8V325.7M528.10 318.9V325.4M529.98 319.9V326.0M531.85 317.6V324.5M533.73 317.4V325.9M535.60 318.8V325.9M537.48 318.2V323.4M539.35 316.5V323.6M541.23 314.0V323.2M543.10 315.4V321.4M544.98 315.3V322.4M546.85 318.1V324.7M548.73 316.8V324.4M550.60 320.3V327.2M552.48 321.0V327.8M554.35 321.0V339.6M556.23 320.2V326.9M558.10 320.0V327.0M559.98 319.9V326.9M561.85 320.9V325.8M563.73 321.6V325.8M565.60 322.9V326.3M567.48 322.1V327.6M569.35 323.9V329.9M571.23 324.0V330.8M573.10 325.2V330.9M574.98 326.7V331.4M576.85 327.7V332.5M578.73 323.5V330.9M580.60 316.0V331.6M582.48 280.0V311.0M584.35 284.7V305.0M586.23 290.9V305.5M588.10 295.9V309.7M589.98 300.4V318.5M591.85 302.8V322.4M593.73 294.0V323.8M595.60 288.4V313.3M597.48 283.0V317.0M599.35 287.5V309.2M601.23 283.3V296.3" stroke="#00f400" stroke-width="0.62" fill="none"/>
<path d="M116.85 313.7h1.25V328.8h-1.25zM118.73 314.5h1.25V321.3h-1.25zM120.60 317.8h1.25V321.3h-1.25zM122.48 319.0h1.25V324.0h-1.25zM124.35 314.2h1.25V322.0h-1.25zM126.23 311.8h1.25V321.0h-1.25zM128.10 308.5h1.25V316.4h-1.25zM129.98 311.9h1.25V314.7h-1.25zM131.85 312.1h1.25V313.7h-1.25zM133.73 311.7h1.25V313.9h-1.25zM135.60 310.6h1.25V312.4h-1.25zM137.48 310.5h1.25V312.3h-1.25zM139.35 308.9h1.25V310.3h-1.25zM143.10 300.0h1.25V308.0h-1.25zM144.98 301.5h1.25V309.6h-1.25zM146.85 309.5h1.25V316.6h-1.25zM148.73 311.8h1.25V313.4h-1.25zM150.60 316.3h1.25V317.5h-1.25zM152.48 313.7h1.25V324.4h-1.25zM154.35 315.5h1.25V324.6h-1.25zM156.23 318.2h1.25V321.7h-1.25zM159.98 313.7h1.25V320.1h-1.25zM161.85 312.7h1.25V321.3h-1.25zM163.73 311.4h1.25V320.6h-1.25zM165.60 313.0h1.25V319.5h-1.25zM167.48 310.8h1.25V311.7h-1.25zM169.35 302.9h1.25V311.7h-1.25zM171.23 301.5h1.25V306.1h-1.25zM173.10 299.0h1.25V305.0h-1.25zM174.98 307.3h1.25V312.4h-1.25zM176.85 312.5h1.25V316.5h-1.25zM180.60 309.3h1.25V314.8h-1.25zM184.35 315.1h1.25V315.7h-1.25zM186.23 315.2h1.25V325.4h-1.25zM197.48 339.5h1.25V342.3h-1.25zM199.35 339.3h1.25V348.7h-1.25zM204.98 348.4h1.25V358.9h-1.25zM208.73 349.6h1.25V361.7h-1.25zM210.60 352.3h1.25V361.0h-1.25zM212.48 350.9h1.25V357.2h-1.25zM214.35 352.5h1.25V358.8h-1.25zM223.73 351.7h1.25V362.7h-1.25zM229.35 352.1h1.25V355.5h-1.25zM231.23 345.3h1.25V350.4h-1.25zM233.10 340.8h1.25V347.7h-1.25zM234.98 337.3h1.25V348.3h-1.25zM238.73 342.6h1.25V350.4h-1.25zM240.60 347.5h1.25V349.3h-1.25zM242.48 341.6h1.25V345.7h-1.25zM246.23 336.8h1.25V342.9h-1.25zM249.98 339.4h1.25V348.2h-1.25zM251.85 337.0h1.25V347.4h-1.25zM253.73 340.2h1.25V347.7h-1.25zM255.61 334.6h1.25V343.2h-1.25zM259.36 341.5h1.25V346.4h-1.25zM263.11 342.4h1.25V352.6h-1.25zM264.98 335.6h1.25V348.6h-1.25zM266.86 338.0h1.25V346.0h-1.25zM268.73 336.9h1.25V346.3h-1.25zM272.48 337.7h1.25V347.2h-1.25zM274.36 341.0h1.25V349.5h-1.25zM276.23 336.9h1.25V348.4h-1.25zM278.11 339.2h1.25V343.1h-1.25zM283.73 345.2h1.25V347.8h-1.25zM287.48 348.7h1.25V351.1h-1.25zM291.23 348.7h1.25V351.6h-1.25zM293.11 347.3h1.25V350.5h-1.25zM294.98 347.8h1.25V352.5h-1.25zM300.61 343.2h1.25V349.7h-1.25zM302.48 345.2h1.25V350.4h-1.25zM304.36 344.1h1.25V346.4h-1.25zM308.11 342.8h1.25V345.6h-1.25zM309.98 341.9h1.25V344.3h-1.25zM311.86 342.2h1.25V345.2h-1.25zM315.61 340.0h1.25V342.0h-1.25zM317.48 336.1h1.25V340.9h-1.25zM323.11 336.9h1.25V339.3h-1.25zM324.98 337.1h1.25V342.9h-1.25zM326.86 340.4h1.25V342.5h-1.25zM330.61 339.8h1.25V340.4h-1.25zM334.36 335.1h1.25V339.5h-1.25zM338.11 329.4h1.25V335.4h-1.25zM339.98 326.4h1.25V332.1h-1.25zM341.86 328.8h1.25V331.2h-1.25zM343.73 325.7h1.25V333.3h-1.25zM345.61 326.9h1.25V328.2h-1.25zM347.48 327.3h1.25V333.7h-1.25zM351.23 332.0h1.25V342.0h-1.25zM353.11 328.8h1.25V330.3h-1.25zM354.98 328.0h1.25V331.6h-1.25zM358.73 325.4h1.25V331.2h-1.25zM362.48 322.3h1.25V327.1h-1.25zM364.36 324.5h1.25V329.4h-1.25zM366.23 321.9h1.25V327.8h-1.25zM368.11 321.5h1.25V325.3h-1.25zM373.73 316.0h1.25V324.0h-1.25zM375.61 320.2h1.25V325.7h-1.25zM379.36 319.6h1.25V323.8h-1.25zM381.23 320.6h1.25V326.6h-1.25zM383.11 321.8h1.25V330.4h-1.25zM384.98 319.5h1.25V326.8h-1.25zM386.86 321.9h1.25V332.4h-1.25zM390.61 324.9h1.25V327.0h-1.25zM392.48 323.3h1.25V330.5h-1.25zM394.36 323.1h1.25V327.8h-1.25zM401.86 325.2h1.25V332.9h-1.25zM403.73 328.2h1.25V329.6h-1.25zM409.36 326.4h1.25V331.6h-1.25zM411.23 327.8h1.25V330.9h-1.25zM414.98 321.6h1.25V325.0h-1.25zM416.86 318.0h1.25V324.0h-1.25zM418.73 317.6h1.25V323.9h-1.25zM420.61 322.4h1.25V323.9h-1.25zM422.48 321.2h1.25V324.2h-1.25zM426.23 323.0h1.25V325.9h-1.25zM428.11 320.0h1.25V325.2h-1.25zM429.98 320.9h1.25V324.6h-1.25zM431.86 322.2h1.25V325.2h-1.25zM435.61 319.7h1.25V324.6h-1.25zM439.36 321.0h1.25V322.1h-1.25zM441.23 319.7h1.25V325.3h-1.25zM443.11 320.8h1.25V324.8h-1.25zM444.98 321.0h1.25V327.4h-1.25zM446.86 319.9h1.25V326.3h-1.25zM448.73 321.1h1.25V326.1h-1.25zM454.36 322.4h1.25V325.0h-1.25zM456.23 321.3h1.25V323.7h-1.25zM458.11 321.9h1.25V327.5h-1.25zM459.98 319.9h1.25V323.4h-1.25zM463.73 320.7h1.25V321.6h-1.25zM465.61 320.4h1.25V322.3h-1.25zM471.23 319.3h1.25V325.0h-1.25zM476.86 318.8h1.25V322.7h-1.25zM478.73 318.7h1.25V322.7h-1.25zM480.61 319.9h1.25V324.3h-1.25zM482.48 319.6h1.25V324.1h-1.25zM484.36 318.4h1.25V326.0h-1.25zM488.11 318.3h1.25V323.7h-1.25zM493.73 321.8h1.25V322.9h-1.25zM495.61 317.5h1.25V321.2h-1.25zM497.48 320.5h1.25V322.8h-1.25zM499.36 318.3h1.25V325.5h-1.25zM501.23 319.3h1.25V320.8h-1.25zM503.11 320.7h1.25V323.9h-1.25zM504.98 320.9h1.25V322.6h-1.25zM506.86 320.5h1.25V322.7h-1.25zM508.73 320.2h1.25V322.7h-1.25zM510.61 316.5h1.25V320.8h-1.25zM512.48 318.7h1.25V320.7h-1.25zM514.36 316.6h1.25V322.2h-1.25zM516.23 317.3h1.25V322.3h-1.25zM518.11 318.1h1.25V324.7h-1.25zM519.98 319.2h1.25V323.7h-1.25zM521.86 321.3h1.25V324.4h-1.25zM523.73 320.6h1.25V321.8h-1.25zM525.61 320.4h1.25V323.5h-1.25zM527.48 321.9h1.25V323.0h-1.25zM529.36 321.5h1.25V324.8h-1.25zM533.11 320.0h1.25V323.7h-1.25zM534.98 319.9h1.25V324.8h-1.25zM538.73 319.2h1.25V322.0h-1.25zM542.48 317.5h1.25V320.6h-1.25zM544.36 317.2h1.25V321.5h-1.25zM546.23 321.0h1.25V324.7h-1.25zM548.11 320.3h1.25V321.5h-1.25zM549.98 321.1h1.25V324.1h-1.25zM557.48 320.4h1.25V323.7h-1.25zM559.36 320.1h1.25V324.5h-1.25zM561.23 321.0h1.25V324.3h-1.25zM564.98 323.1h1.25V326.0h-1.25zM570.61 325.5h1.25V330.8h-1.25zM574.36 328.1h1.25V331.3h-1.25zM576.23 328.5h1.25V330.8h-1.25zM578.11 323.9h1.25V327.9h-1.25zM579.98 317.0h1.25V331.0h-1.25zM581.86 296.0h1.25V310.0h-1.25zM585.61 294.5h1.25V304.7h-1.25zM587.48 300.7h1.25V304.3h-1.25zM589.36 304.0h1.25V310.4h-1.25zM594.98 297.8h1.25V305.2h-1.25zM596.86 290.0h1.25V312.0h-1.25zM598.73 295.9h1.25V302.9h-1.25zM600.61 284.9h1.25V295.0h-1.25z" fill="#00c400"/>
<path d="M114.98 306.0h1.25V328.0h-1.25zM141.23 303.9h1.25V305.6h-1.25zM158.10 316.3h1.25V317.9h-1.25zM178.73 310.8h1.25V311.9h-1.25zM182.48 308.1h1.25V314.3h-1.25zM188.10 323.2h1.25V326.5h-1.25zM189.98 328.0h1.25V330.0h-1.25zM191.85 330.4h1.25V336.9h-1.25zM193.73 331.2h1.25V335.1h-1.25zM195.60 327.8h1.25V336.6h-1.25zM201.23 347.4h1.25V352.5h-1.25zM203.10 352.0h1.25V368.0h-1.25zM206.85 354.4h1.25V360.5h-1.25zM216.23 350.0h1.25V353.6h-1.25zM218.10 346.1h1.25V352.2h-1.25zM219.98 345.5h1.25V349.5h-1.25zM221.85 349.2h1.25V354.5h-1.25zM225.60 351.0h1.25V358.0h-1.25zM227.48 349.8h1.25V358.4h-1.25zM236.85 346.8h1.25V348.3h-1.25zM244.35 338.1h1.25V348.9h-1.25zM248.10 340.2h1.25V346.4h-1.25zM257.48 340.3h1.25V346.5h-1.25zM261.23 340.4h1.25V344.0h-1.25zM270.61 342.2h1.25V345.6h-1.25zM279.98 339.5h1.25V345.5h-1.25zM281.86 335.5h1.25V352.5h-1.25zM285.61 347.2h1.25V349.4h-1.25zM289.36 348.2h1.25V355.9h-1.25zM296.86 343.3h1.25V347.9h-1.25zM298.73 344.9h1.25V348.6h-1.25zM306.23 343.1h1.25V348.0h-1.25zM313.73 341.7h1.25V343.3h-1.25zM319.36 337.6h1.25V342.2h-1.25zM321.23 339.4h1.25V340.6h-1.25zM328.73 338.9h1.25V340.5h-1.25zM332.48 338.9h1.25V341.9h-1.25zM336.23 332.9h1.25V337.7h-1.25zM349.36 328.0h1.25V338.0h-1.25zM356.86 327.6h1.25V329.0h-1.25zM360.61 325.4h1.25V327.2h-1.25zM369.98 322.5h1.25V323.7h-1.25zM371.86 318.4h1.25V322.3h-1.25zM377.48 320.3h1.25V327.0h-1.25zM388.73 324.1h1.25V325.2h-1.25zM396.23 327.9h1.25V332.1h-1.25zM398.11 327.5h1.25V335.6h-1.25zM399.98 327.0h1.25V336.0h-1.25zM405.61 326.9h1.25V331.0h-1.25zM407.48 326.5h1.25V332.1h-1.25zM413.11 322.3h1.25V325.8h-1.25zM424.36 321.7h1.25V323.4h-1.25zM433.73 321.9h1.25V324.1h-1.25zM437.48 321.2h1.25V322.9h-1.25zM450.61 320.8h1.25V324.7h-1.25zM452.48 320.8h1.25V323.9h-1.25zM461.86 319.5h1.25V324.2h-1.25zM467.48 322.3h1.25V324.0h-1.25zM469.36 317.2h1.25V323.1h-1.25zM473.11 317.9h1.25V323.1h-1.25zM474.98 319.8h1.25V325.6h-1.25zM486.23 320.0h1.25V326.1h-1.25zM489.98 322.1h1.25V322.7h-1.25zM491.86 322.2h1.25V324.3h-1.25zM531.23 317.7h1.25V322.6h-1.25zM536.86 320.1h1.25V323.4h-1.25zM540.61 314.2h1.25V321.7h-1.25zM551.86 324.3h1.25V326.2h-1.25zM553.73 322.0h1.25V330.0h-1.25zM555.61 322.3h1.25V326.6h-1.25zM563.11 323.5h1.25V325.7h-1.25zM566.86 324.3h1.25V325.9h-1.25zM568.73 324.2h1.25V329.6h-1.25zM572.48 326.2h1.25V330.0h-1.25zM583.73 287.0h1.25V302.0h-1.25zM591.23 304.8h1.25V319.8h-1.25zM593.11 300.0h1.25V318.0h-1.25z" fill="#98f898"/>
<text x="120" y="319.6" font-family="Liberation Sans, sans-serif" font-size="4.42" fill="#d4dcd4" opacity="0.8" text-rendering="geometricPrecision">#1412061397 buy 0.01</text>
<path d="M601.2 298V284h2.2v14z" fill="#00a000"/>
<path d="M605.9 144.8H609.4V196.5H607.8V262L605.3 266.5V291H602.7V266L603.8 261.5L604.1 213L605 205.5L605.9 200z" fill="#008c00"/>
<path d="M608.7 134.2V145" stroke="#00b400" stroke-width="0.9"/>
<path d="M608.6 196.3V232.5" stroke="#1414ff" stroke-width="1.6"/>
<path d="M167.8 357.7L181.9 340.5M170.2 340L181.9 340.5L183.1 348.75" stroke="#ff1010" stroke-width="1" fill="none"/>
<path d="M555.2 291L570 300.3M570.8 290.2L570 300.3L559.8 301" stroke="#ff1010" stroke-width="1" fill="none"/>
<path d="M614.1 122.5V379.6M115 379.2H614.6" stroke="#8e8e8e" stroke-width="1.1" fill="none"/>
<path d="M114.6 379.4v1.4M144.5 379.4v1.4M174.5 379.4v1.4M204.4 379.4v1.4M234.4 379.4v1.4M264.4 379.4v1.4M294.3 379.4v1.4M324.2 379.4v1.4M354.2 379.4v1.4M384.1 379.4v1.4M414.1 379.4v1.4M444.0 379.4v1.4M474.0 379.4v1.4M503.9 379.4v1.4M533.9 379.4v1.4M563.9 379.4v1.4M593.8 379.4v1.4M614.5 130.90h1.2M614.5 146.36h1.2M614.5 161.82h1.2M614.5 177.28h1.2M614.5 192.74h1.2M614.5 208.20h1.2M614.5 223.66h1.2M614.5 239.12h1.2M614.5 254.58h1.2M614.5 270.04h1.2M614.5 285.50h1.2M614.5 300.96h1.2M614.5 316.42h1.2M614.5 331.88h1.2M614.5 347.34h1.2M614.5 362.80h1.2M614.5 378.26h1.2" stroke="#c8c8c8" stroke-width="0.7" fill="none"/>
<g font-family="Liberation Sans, sans-serif" font-size="4.42" fill="#fff" stroke="#fff" stroke-width="0.2" text-rendering="geometricPrecision">
<text x="616.4" y="132.4" font-size="4.8" stroke-width="0.16" textLength="15.8" lengthAdjust="spacingAndGlyphs">487.475</text>
<text x="616.4" y="147.9" font-size="4.8" stroke-width="0.16" textLength="15.8" lengthAdjust="spacingAndGlyphs">483.565</text>
<text x="616.4" y="163.3" font-size="4.8" stroke-width="0.16" textLength="15.8" lengthAdjust="spacingAndGlyphs">479.655</text>
<text x="616.4" y="178.8" font-size="4.8" stroke-width="0.16" textLength="15.8" lengthAdjust="spacingAndGlyphs">475.860</text>
<text x="616.4" y="194.2" font-size="4.8" stroke-width="0.16" textLength="15.8" lengthAdjust="spacingAndGlyphs">471.950</text>
<text x="616.4" y="209.7" font-size="4.8" stroke-width="0.16" textLength="15.8" lengthAdjust="spacingAndGlyphs">468.040</text>
<text x="616.4" y="225.2" font-size="4.8" stroke-width="0.16" textLength="15.8" lengthAdjust="spacingAndGlyphs">464.245</text>
<text x="616.4" y="240.6" font-size="4.8" stroke-width="0.16" textLength="15.8" lengthAdjust="spacingAndGlyphs">460.335</text>
<text x="616.4" y="256.1" font-size="4.8" stroke-width="0.16" textLength="15.8" lengthAdjust="spacingAndGlyphs">456.540</text>
<text x="616.4" y="271.5" font-size="4.8" stroke-width="0.16" textLength="15.8" lengthAdjust="spacingAndGlyphs">452.630</text>
<text x="616.4" y="287.0" font-size="4.8" stroke-width="0.16" textLength="15.8" lengthAdjust="spacingAndGlyphs">448.720</text>
<text x="616.4" y="302.5" font-size="4.8" stroke-width="0.16" textLength="15.8" lengthAdjust="spacingAndGlyphs">444.925</text>
<text x="616.4" y="317.9" font-size="4.8" stroke-width="0.16" textLength="15.8" lengthAdjust="spacingAndGlyphs">441.015</text>
<text x="616.4" y="333.4" font-size="4.8" stroke-width="0.16" textLength="15.8" lengthAdjust="spacingAndGlyphs">437.105</text>
<text x="616.4" y="348.8" font-size="4.8" stroke-width="0.16" textLength="15.8" lengthAdjust="spacingAndGlyphs">433.310</text>
<text x="616.4" y="364.3" font-size="4.8" stroke-width="0.16" textLength="15.8" lengthAdjust="spacingAndGlyphs">429.400</text>
<text x="616.4" y="379.8" font-size="4.8" stroke-width="0.16" textLength="15.8" lengthAdjust="spacingAndGlyphs">425.605</text>
<text x="114.8" y="386">9 May 2014</text>
<text x="144.8" y="386">10 May 12:00</text>
<text x="174.7" y="386">11 May 04:00</text>
<text x="204.6" y="386">11 May 20:00</text>
<text x="234.6" y="386">12 May 12:00</text>
<text x="264.6" y="386">13 May 04:00</text>
<text x="294.5" y="386">13 May 20:00</text>
<text x="324.4" y="386">14 May 12:00</text>
<text x="354.4" y="386">15 May 04:00</text>
<text x="384.4" y="386">15 May 20:00</text>
<text x="414.3" y="386">16 May 12:00</text>
<text x="444.2" y="386">17 May 04:00</text>
<text x="474.2" y="386">17 May 20:00</text>
<text x="504.1" y="386">18 May 12:00</text>
<text x="534.1" y="386">19 May 04:00</text>
<text x="564.0" y="386">19 May 20:00</text>
<text x="594.0" y="386">20 May 12:00</text>
<text x="122" y="127.8" stroke-width="0.08">BTCUSD,H1  477.001 486.370 472.000 477.003</text>
<text x="117.5" y="150.2" stroke-width="0.08">#1411092345 buy 0.04</text>
<text x="581" y="128.8">squeeze_125</text>
</g>
<path d="M116.2 125.3h3.1l-1.55 2.1z" fill="#f0f0f0"/>
<circle cx="609.6" cy="127.2" r="1.7" fill="none" stroke="#e0e0e0" stroke-width="0.5"/>
<rect x="615.2" y="170.2" width="18.4" height="4.6" fill="#f4f4f4"/>
<text x="616.4" y="174.1" font-family="Liberation Sans, sans-serif" font-size="4.35" fill="#000" text-rendering="geometricPrecision">477.003</text>
</svg>
<!-- chart tabs -->
<div style="left:112.8px;top:388px;width:521.9px;height:10.4px;background:#f0f0f0"></div>
<div style="left:112.8px;top:388px;width:521.9px;height:0.6px;background:#222"></div>
<div style="left:151.6px;top:388.2px;width:36.8px;height:8.6px;background:#fff;border:0.6px solid #555;border-top:none;box-sizing:border-box"></div>
<div class="sep" style="left:148.4px;top:389.4px;height:6.4px;background:#777"></div>
<div class="sep" style="left:228px;top:389.4px;height:6.4px;background:#777"></div>
<svg style="position:absolute;left:618px;top:390px" width="16" height="6" viewBox="0 0 16 6"><path d="M4.6 1.4L3.4 3l1.2 1.6M12 1.4L13.2 3 12 4.6" stroke="#666" stroke-width="0.6" fill="none"/></svg>
<!-- status bar -->
<div style="left:4.4px;top:398.6px;width:630.2px;height:0.5px;background:#c8c8c8"></div>
<div class="sep" style="left:295.5px;top:400.2px;height:7.2px;background:#b8b8b8"></div>
<div class="sep" style="left:349.4px;top:400.2px;height:7.2px;background:#b8b8b8"></div>
<div class="sep" style="left:397.2px;top:400.2px;height:7.2px;background:#b8b8b8"></div>
<div class="sep" style="left:430.0px;top:400.2px;height:7.2px;background:#b8b8b8"></div>
<div class="sep" style="left:463.7px;top:400.2px;height:7.2px;background:#b8b8b8"></div>
<div class="sep" style="left:495.6px;top:400.2px;height:7.2px;background:#b8b8b8"></div>
<div class="sep" style="left:528.4px;top:400.2px;height:7.2px;background:#b8b8b8"></div>
<div class="sep" style="left:561.2px;top:400.2px;height:7.2px;background:#b8b8b8"></div>
<svg style="position:absolute;left:562px;top:400.6px" width="12" height="5" viewBox="0 0 12 5"><path d="M1 0.4h1.6v4.2H1zM3.4 0.4H5v4.2H3.4zM5.8 0.4h1.6v4.2H5.8zM8.2 0.4h1.6v4.2H8.2z" fill="#7a9a2a"/></svg>
<svg style="position:absolute;left:630px;top:404px" width="5" height="5" viewBox="0 0 5 5"><path d="M4.6 0.6L0.6 4.6M4.6 2.4L2.4 4.6" stroke="#a0a0a0" stroke-width="0.5"/></svg>
<svg style="position:absolute;left:0;top:0" width="640" height="480" viewBox="0 0 640 480" font-family="Liberation Sans, sans-serif" text-rendering="geometricPrecision">
<text x="14.00" y="83.0" font-size="5.35" fill="#111">603371: BTC-e Exchange MT4 - [BTCUSD,H1]</text>
<text x="16.90" y="92.0" font-size="5.00" fill="#111">File</text>
<text x="33.20" y="92.0" font-size="5.00" fill="#111">View</text>
<text x="52.60" y="92.0" font-size="5.00" fill="#111">Insert</text>
<text x="72.80" y="92.0" font-size="5.00" fill="#111">Charts</text>
<text x="95.70" y="92.0" font-size="5.00" fill="#111">Tools</text>
<text x="116.10" y="92.0" font-size="5.00" fill="#111">Window</text>
<text x="143.20" y="92.0" font-size="5.00" fill="#111">Help</text>
<text x="126.50" y="104.0" font-size="5.45" fill="#111">New Order</text>
<text x="181.00" y="104.0" font-size="5.35" fill="#111">AutoTrading</text>
<text x="153.00" y="117.0" font-size="4.90" fill="#444">M1</text>
<text x="166.00" y="117.0" font-size="4.90" fill="#444">M5</text>
<text x="178.00" y="117.0" font-size="4.90" fill="#444">M15</text>
<text x="191.10" y="117.0" font-size="4.90" fill="#444">M30</text>
<text x="205.70" y="117.0" font-size="4.90" fill="#444">H1</text>
<text x="218.80" y="117.0" font-size="4.90" fill="#444">H4</text>
<text x="231.90" y="117.0" font-size="4.90" fill="#444">D1</text>
<text x="244.90" y="117.0" font-size="4.90" fill="#444">W1</text>
<text x="257.50" y="117.0" font-size="4.90" fill="#444">MN</text>
<text x="6.60" y="127.0" font-size="5.20" fill="#3a4a60">Market Watch: 20:40:21</text>
<text x="9.00" y="137.0" font-size="5.00" fill="#222">Symbol</text>
<text x="72.40" y="137.0" font-size="5.00" fill="#222" text-anchor="end">Bid</text>
<text x="100.00" y="137.0" font-size="5.00" fill="#222" text-anchor="end">Ask</text>
<text x="11.30" y="255.0" font-size="5.20" fill="#000" stroke="#000" stroke-width="0.1">Symbols</text>
<text x="39.40" y="255.0" font-size="5.00" fill="#666">Tick Chart</text>
<text x="6.60" y="265.0" font-size="5.20" fill="#3a4a60">Navigator</text>
<text x="18.80" y="274.0" font-size="5.35" fill="#000" textLength="36.3" lengthAdjust="spacingAndGlyphs">BTC-eExchange</text>
<text x="29.00" y="283.0" font-size="5.35" fill="#000">Accounts</text>
<text x="29.00" y="291.0" font-size="5.35" fill="#000">Indicators</text>
<text x="29.00" y="299.0" font-size="5.35" fill="#000">Expert Advisors</text>
<text x="38.70" y="308.0" font-size="5.35" fill="#000">MACD Sample</text>
<text x="38.70" y="316.0" font-size="5.35" fill="#000">Moving Average</text>
<text x="38.70" y="325.0" font-size="5.35" fill="#000">squeeze_125</text>
<text x="38.70" y="333.0" font-size="5.35" fill="#000">596 more...</text>
<text x="29.00" y="342.0" font-size="5.35" fill="#000">Custom Indicators</text>
<text x="29.00" y="350.0" font-size="5.35" fill="#000">Scripts</text>
<text x="11.20" y="393.0" font-size="5.00" fill="#000">Common</text>
<text x="40.00" y="393.0" font-size="5.00" fill="#777">Favorites</text>
<text x="121.00" y="394.0" font-size="4.70" fill="#555">BTCUSD,H1</text>
<text x="156.60" y="394.0" font-size="4.80" fill="#000" stroke="#000" stroke-width="0.12" textLength="26.6" lengthAdjust="spacingAndGlyphs">BTCUSD,H1</text>
<text x="195.00" y="394.0" font-size="4.70" fill="#666">PPCBTC,M30</text>
<text x="5.20" y="406.0" font-size="5.15" fill="#111">For Help, press F1</text>
<text x="298.10" y="406.0" font-size="5.30" fill="#111" textLength="17.8" lengthAdjust="spacingAndGlyphs">Default</text>
<text x="585.60" y="406.0" font-size="5.30" fill="#111" textLength="28" lengthAdjust="spacingAndGlyphs">1338/3 kb</text>
</svg>
<!-- teamviewer panel -->
<svg style="position:absolute;left:624px;top:364px" width="16" height="30" viewBox="0 0 16 30"><path d="M3.5 5.4L5.2 3.9H14.8V26.8L11 25.2 3.5 23.4z" fill="#686b70"/><rect x="5.7" y="5.7" width="8.3" height="9" rx="0.8" fill="#1b4f96"/><circle cx="9.85" cy="10.2" r="2.9" fill="#1f5aa6" stroke="#5a96d8" stroke-width="0.7"/><path d="M7.9 10.2h3.9M7.9 10.2l1.1-.9v1.8zM11.8 10.2l-1.1-.9v1.8z" stroke="#8abcf0" stroke-width="0.45" fill="#8abcf0"/></svg>
<!-- tooltip -->
<div style="left:562.8px;top:404.8px;width:75.4px;height:6px;background:#fff;border:0.6px solid #8c8c8c;box-sizing:border-box"></div>
<svg style="position:absolute;left:560px;top:400px" width="80" height="14" viewBox="560 400 80 14" font-family="Liberation Sans, sans-serif" text-rendering="geometricPrecision"><text x="566" y="411" font-size="5.75" fill="#575757" textLength="68.4" lengthAdjust="spacingAndGlyphs">Lautsprecher/Kopfhörer: 8%</text></svg>
<div style="left:0;top:409.8px;width:640px;height:71px;background:#000"></div>
</body></html>
